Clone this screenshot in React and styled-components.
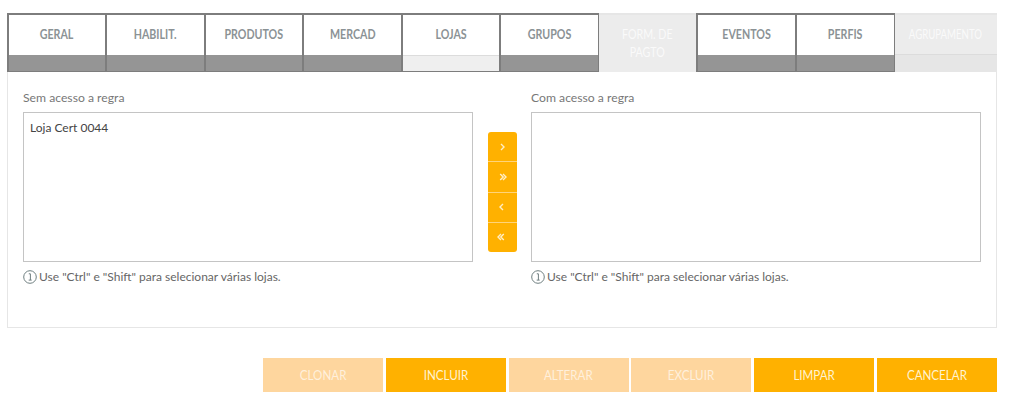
import React from "react";
import styled, { createGlobalStyle } from "styled-components";

const GlobalStyle = createGlobalStyle`
	html, body {
		margin: 0;
		background: #fff;
		font-family: "Lato", "Liberation Sans", sans-serif;
	}
	* { box-sizing: border-box; }
`;

const Page = styled.div`
	width: 1010px;
	height: 405px;
	padding: 13px 13px 0 7px;
	overflow: hidden;
`;

const Tabs = styled.div`
	display: flex;
	height: 59px;
	margin-left: -0.4px;
`;

const Tab = styled.div`
	flex: ${(props) => (props.$grow ? "1" : props.$off ? "0 0 98.55px" : "0 0 99.55px")};
	min-width: 0;
	display: flex;
	flex-direction: column;
	margin-right: ${(props) => (props.$off ? "0" : "-1px")};
	position: relative;
	z-index: ${(props) => (props.$off ? 0 : 1)};
	border: ${(props) => (props.$off ? "0" : "1px solid #7d7d7d")};
	border-top: 2px solid ${(props) => (props.$off ? "#e6e6e6" : "#7d7d7d")};
	border-left-width: ${(props) => (props.$off ? "0" : "2px")};
`;

const TabLabel = styled.div`
	flex: 1;
	display: flex;
	align-items: ${(props) => (props.$off ? "flex-start" : "center")};
	justify-content: center;
	padding: ${(props) => (props.$off ? (props.$wide ? "10px 0 0" : "10px 10px 0") : "0 0 2px")};
	background: ${(props) => (props.$off ? "#ececec" : "#fff")};
	color: ${(props) => (props.$off ? "#fafafa" : "#8b9295")};
	font-size: 13px;
	font-weight: ${(props) => (props.$off ? 400 : 700)};
	line-height: 18px;
	text-align: center;
`;

// the reference uses a narrow face, so the wider installed one is squeezed
const Squeezed = styled.span`
	display: inline-block;
	transform: scaleX(${(props) => props.$x || 0.82});
`;

const TabBar = styled.div`
	height: ${(props) => (props.$short ? "18px" : "16px")};
	background: ${(props) => props.$color};
	border-top: ${(props) => (props.$line ? "1px solid #dcdcdc" : "0")};
`;

const Panel = styled.div`
	height: 256px;
	padding: 17px 15px 0 15px;
	border: 1px solid #e6e6e6;
	border-top: 0;
	display: grid;
	grid-template-columns: 450px 58px 450px;
`;

const Column = styled.div`
	display: flex;
	flex-direction: column;
`;

const FieldLabel = styled.div`
	height: 23px;
	font-size: 12.2px;
	line-height: 17px;
	color: #777;
`;

const ListBox = styled.div`
	height: 150px;
	border: 1px solid #c4c4c4;
	padding: 7px 6px;
	font-size: 12px;
	line-height: 15px;
	color: #444;
`;

const Hint = styled.div`
	display: flex;
	align-items: center;
	gap: 2px;
	margin-top: 7px;
	font-size: 12px;
	line-height: 16px;
	color: #666;
`;

const MoveColumn = styled.div`
	display: flex;
	justify-content: center;
	padding-top: 43px;
`;

const MoveStack = styled.div`
	width: 29px;
	height: 120px;
	display: flex;
	flex-direction: column;
	border-radius: 3px;
	overflow: hidden;
	background: #ffb100;
`;

const MoveButton = styled.div`
	flex: 1;
	display: flex;
	align-items: center;
	justify-content: center;
	border-top: ${(props) => (props.$first ? "0" : "1px solid #ffd47a")};
`;

const Actions = styled.div`
	display: flex;
	justify-content: flex-end;
	gap: 2.8px;
	margin-top: 30px;
`;

const ActionButton = styled.div`
	width: 120px;
	height: 34px;
	display: flex;
	align-items: center;
	justify-content: center;
	background: ${(props) => (props.$off ? "#fed69e" : "#ffb100")};
	color: ${(props) => (props.$off ? "#fff0dc" : "#fff3d0")};
	font-size: 13.5px;
`;

const InfoIcon = () => (
	<svg width="14" height="14" viewBox="0 0 14 14" fill="none" stroke="#6f7f80" strokeWidth="1">
		<circle cx="7" cy="7" r="6.3" />
		<path d="M5.8 3.8h1.6v6.2M5.7 10.1h3" />
	</svg>
);

const Chevron = ({ dir, double }) => {
	const s = dir === "right" ? 1 : -1;
	const one = (x) => `M${5 + s * (x - 2)} 2l${s * 3} 3l${-s * 3} 3`;
	return (
		<svg width="10" height="10" viewBox="0 0 10 10" fill="none" stroke="#ffeec6" strokeWidth="1.4">
			{double ? (
				<>
					<path d={one(0.2)} />
					<path d={one(3)} />
				</>
			) : (
				<path d={one(1)} />
			)}
		</svg>
	);
};

const tabs = [
	{ label: "GERAL" },
	{ label: "HABILIT." },
	{ label: "PRODUTOS" },
	{ label: "MERCAD" },
	{ label: "LOJAS", current: true },
	{ label: "GRUPOS" },
	{ label: "FORM. DE PAGTO", off: true },
	{ label: "EVENTOS" },
	{ label: "PERFIS" },
	{ label: "AGRUPAMENTO", off: true, grow: true },
];

const actions = [
	{ label: "CLONAR", off: true },
	{ label: "INCLUIR" },
	{ label: "ALTERAR", off: true },
	{ label: "EXCLUIR", off: true },
	{ label: "LIMPAR" },
	{ label: "CANCELAR" },
];

const hint = 'Use "Ctrl" e "Shift" para selecionar várias lojas.';

export default function App() {
	return (
		<Page>
			<GlobalStyle />
			<Tabs>
				{tabs.map((tab) => (
					<Tab key={tab.label} $off={tab.off} $grow={tab.grow}>
						<TabLabel $off={tab.off} $wide={tab.grow}>
							<Squeezed $x={tab.grow ? 0.74 : 0.82}>{tab.label}</Squeezed>
						</TabLabel>
						{tab.off ? (
							tab.grow && <TabBar $short $line $color="#e6e6e6" />
						) : (
							<TabBar $line={tab.current} $color={tab.current ? "#efefef" : "#959595"} />
						)}
					</Tab>
				))}
			</Tabs>
			<Panel>
				<Column>
					<FieldLabel>Sem acesso a regra</FieldLabel>
					<ListBox>Loja Cert 0044</ListBox>
					<Hint>
						<InfoIcon />
						{hint}
					</Hint>
				</Column>
				<MoveColumn>
					<MoveStack>
						<MoveButton $first>
							<Chevron dir="right" />
						</MoveButton>
						<MoveButton>
							<Chevron dir="right" double />
						</MoveButton>
						<MoveButton>
							<Chevron dir="left" />
						</MoveButton>
						<MoveButton>
							<Chevron dir="left" double />
						</MoveButton>
					</MoveStack>
				</MoveColumn>
				<Column>
					<FieldLabel>Com acesso a regra</FieldLabel>
					<ListBox />
					<Hint>
						<InfoIcon />
						{hint}
					</Hint>
				</Column>
			</Panel>
			<Actions>
				{actions.map((action) => (
					<ActionButton key={action.label} $off={action.off}>
						<Squeezed $x={0.86}>{action.label}</Squeezed>
					</ActionButton>
				))}
			</Actions>
		</Page>
	);
}
